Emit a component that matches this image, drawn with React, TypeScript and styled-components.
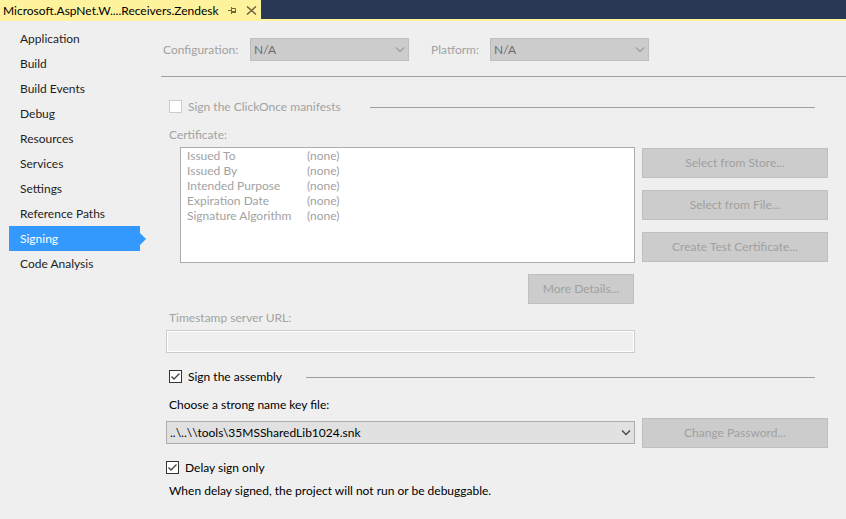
import React, { useState } from "react";
import styled, { createGlobalStyle } from "styled-components";

const GlobalStyle = createGlobalStyle`
  *, *::before, *::after { box-sizing: border-box; }
  body {
    margin: 0;
    background: #efefef;
    color: #000;
    font: 12px/16px Lato, "Open Sans", sans-serif;
  }
  button, input, select { font: inherit; }
`;

const Page = styled.div`
  display: flex;
  flex-direction: column;
  min-height: 100vh;
`;

const TabStrip = styled.header`
  display: flex;
  height: 21px;
  background: #293955;
  border-bottom: 2px solid #fff29d;
`;

const DocumentTab = styled.div`
  display: flex;
  align-items: center;
  width: 261px;
  height: 21px;
  padding-left: 3px;
  background: #fff29d;
  white-space: nowrap;
`;

const TabTitle = styled.span`
  flex: 1;
`;

const TabButton = styled.button`
  display: flex;
  align-items: center;
  justify-content: center;
  width: 19px;
  height: 19px;
  padding: 0;
  border: 0;
  background: transparent;
  color: #75633d;
`;

const Workspace = styled.div`
  display: flex;
  flex: 1;
`;

const Sidebar = styled.nav`
  flex: none;
  width: 161px;
  padding: 5px 15px 0 9px;
`;

const NavItem = styled.a<{ $active?: boolean }>`
  display: flex;
  align-items: center;
  height: 25px;
  color: ${(p) => (p.$active ? "#fff" : "#1e1e1e")};
  text-decoration: none;
`;

const NavText = styled.span<{ $active?: boolean }>`
  flex: 1;
  padding-left: 11px;
  line-height: 25px;
  margin-right: ${(p) => (p.$active ? "0" : "6px")};
  background: ${(p) => (p.$active ? "#3399ff" : "transparent")};
`;

const NavArrow = styled.span`
  border: 6px solid transparent;
  border-right: 0;
  border-left-color: #3399ff;
`;

const Main = styled.main`
  flex: 1;
  min-width: 0;
`;

const ConfigBar = styled.div`
  display: flex;
  align-items: center;
  height: 56px;
  padding: 3px 0 0 2px;
  border-bottom: 1px solid #a0a0a0;
`;

const BarLabel = styled.label<{ $width: number }>`
  flex: none;
  width: ${(p) => p.$width}px;
  color: #a2a2a2;
`;

const SelectShell = styled.span<{ $width?: number }>`
  display: grid;
  align-items: center;
  width: ${(p) => (p.$width ? `${p.$width}px` : "auto")};
  margin-right: ${(p) => (p.$width ? "22px" : "0")};
  margin-bottom: 1px;
`;

const SelectBox = styled.select`
  grid-area: 1 / 1;
  width: 100%;
  height: 23px;
  padding: 0 20px 0 3px;
  border: 1px solid #acacac;
  border-radius: 0;
  background: #e1e1e1;
  color: #000;
  appearance: none;

  &:disabled {
    border-color: #bfbfbf;
    background: #ccc;
    color: #6d6d6d;
    opacity: 1;
  }
`;

const Chevron = styled.svg<{ $muted?: boolean }>`
  grid-area: 1 / 1;
  justify-self: end;
  margin-right: 4px;
  color: ${(p) => (p.$muted ? "#a0a0a0" : "#444")};
  pointer-events: none;
`;

const Form = styled.form`
  padding: 22px 18px 16px 5px;
`;

const GroupHeading = styled.div`
  display: flex;
  align-items: center;
  height: 16px;
  padding: 0 13px 0 3px;
`;

const Rule = styled.hr`
  flex: 1;
  height: 1px;
  margin: 0;
  border: 0;
  background: #a0a0a0;
`;

const CheckLabel = styled.label<{ $width?: number; $muted?: boolean }>`
  display: inline-flex;
  align-items: center;
  gap: 6px;
  width: ${(p) => (p.$width ? `${p.$width}px` : "auto")};
  color: ${(p) => (p.$muted ? "#a2a2a2" : "#000")};
  white-space: nowrap;
`;

const CheckShell = styled.span`
  display: grid;
  width: 13px;
  height: 13px;
  margin-bottom: 1px;
`;

const CheckInput = styled.input`
  grid-area: 1 / 1;
  width: 13px;
  height: 13px;
  margin: 0;
  border: 1px solid #333;
  background: #fff;
  appearance: none;

  &:disabled {
    border-color: #ccc;
  }
`;

const Tick = styled.svg`
  grid-area: 1 / 1;
  pointer-events: none;
`;

const FieldLabel = styled.label<{ $muted?: boolean }>`
  display: block;
  padding-left: 3px;
  color: ${(p) => (p.$muted ? "#a2a2a2" : "#000")};
`;

const Columns = styled.div`
  display: grid;
  grid-template-columns: minmax(0, 1fr) 186px;
  column-gap: 7px;
`;

const CertificateColumns = styled(Columns)`
  margin: 12px 0 6px;
`;

const CertificateLabel = styled(FieldLabel)`
  grid-column: 1 / -1;
  margin-bottom: 4px;
`;

const CertificatePanel = styled.div`
  min-height: 116px;
  margin-left: 14px;
  padding: 0 6px;
  border: 1px solid #abadb3;
  background: #fff;
  color: #a2a2a2;
`;

const CertificateTable = styled.table`
  border-collapse: collapse;
  line-height: 15px;

  th, td {
    padding: 0;
    font-weight: 400;
    text-align: left;
  }
  th { width: 120px; }
`;

const ButtonStack = styled.div`
  display: flex;
  flex-direction: column;
  gap: 12px;
  padding-top: 1px;
`;

const PushButton = styled.button<{ $width?: number }>`
  width: ${(p) => (p.$width ? `${p.$width}px` : "100%")};
  height: 30px;
  padding: 0;
  border: 1px solid #bfbfbf;
  background: #ccc;
  color: #a0a0a0;
`;

const DetailsRow = styled.div`
  display: flex;
  justify-content: flex-end;
  padding: 11px 1px 0 0;
`;

const UrlInput = styled.input`
  grid-column: 1;
  width: 100%;
  height: 23px;
  margin: 4px 0 16px;
  padding: 0 4px;
  border: 1px solid #ccc;
  border-radius: 0;
  outline: 1px solid #fff;
  outline-offset: -2px;
  background: #efefef;
`;

const KeyColumns = styled(Columns)`
  align-items: center;
  margin: 5px 0 12px;
`;

const KeyLabel = styled(FieldLabel)`
  margin-top: 12px;
`;

const Note = styled.p`
  margin: 5px 0 0;
  padding-left: 3px;
`;

const pages = [
  "Application", "Build", "Build Events", "Debug", "Resources",
  "Services", "Settings", "Reference Paths", "Signing", "Code Analysis",
];

const certificateFields = [
  "Issued To", "Issued By", "Intended Purpose", "Expiration Date", "Signature Algorithm",
];

function Dropdown({ id, value, disabled, width }: {
  id: string; value: string; disabled?: boolean; width?: number;
}) {
  return (
    <SelectShell $width={width}>
      <SelectBox id={id} disabled={disabled} defaultValue={value}>
        <option value={value}>{value}</option>
      </SelectBox>
      <Chevron $muted={disabled} width="10" height="7" viewBox="0 0 10 7" aria-hidden="true">
        <path d="M1 1.5 L5 5.5 L9 1.5" fill="none" stroke="currentColor" strokeWidth="1.3" />
      </Chevron>
    </SelectShell>
  );
}

function Check({ label, initial = false, disabled, width }: {
  label: string; initial?: boolean; disabled?: boolean; width?: number;
}) {
  const [checked, setChecked] = useState(initial);
  return (
    <CheckLabel $muted={disabled} $width={width}>
      <CheckShell>
        <CheckInput
          type="checkbox"
          checked={checked}
          disabled={disabled}
          onChange={(e) => setChecked(e.target.checked)}
        />
        {checked && (
          <Tick width="13" height="13" viewBox="0 0 13 13" aria-hidden="true">
            <path d="M2.5 6.5 L5 9 L10.5 3.5" fill="none" stroke="#444" strokeWidth="1.4" />
          </Tick>
        )}
      </CheckShell>
      {label}
    </CheckLabel>
  );
}

export default function App() {
  return (
    <Page>
      <GlobalStyle />
      <TabStrip>
        <DocumentTab>
          <TabTitle>Microsoft.AspNet.W....Receivers.Zendesk</TabTitle>
          <TabButton type="button" aria-label="Pin tab">
            <svg width="9" height="7" viewBox="0 0 9 7" fill="none" stroke="currentColor">
              <path d="M0 3.5H3M3.5 0V7M3.5 1.5H7.5V5.5M3.5 4.5H8M3.5 5.5H8" />
            </svg>
          </TabButton>
          <TabButton type="button" aria-label="Close tab">
            <svg width="11" height="9" viewBox="0 0 11 9" fill="none" stroke="currentColor">
              <path d="M1 0.5L10 8.5M10 0.5L1 8.5" strokeWidth="1.5" />
            </svg>
          </TabButton>
        </DocumentTab>
      </TabStrip>
      <Workspace>
        <Sidebar aria-label="Project properties">
          {pages.map((page) => {
            const active = page === "Signing";
            return (
              <NavItem key={page} href="#" $active={active} aria-current={active ? "page" : undefined}>
                <NavText $active={active}>{page}</NavText>
                {active && <NavArrow />}
              </NavItem>
            );
          })}
        </Sidebar>
        <Main>
          <ConfigBar>
            <BarLabel htmlFor="configuration" $width={87}>Configuration:</BarLabel>
            <Dropdown id="configuration" value="N/A" width={159} disabled />
            <BarLabel htmlFor="platform" $width={59}>Platform:</BarLabel>
            <Dropdown id="platform" value="N/A" width={159} disabled />
          </ConfigBar>
          <Form>
            <GroupHeading>
              <Check label="Sign the ClickOnce manifests" width={201} disabled />
              <Rule />
            </GroupHeading>
            <CertificateColumns>
              <CertificateLabel as="div" id="certificate-label" $muted>Certificate:</CertificateLabel>
              <CertificatePanel>
                <CertificateTable aria-labelledby="certificate-label">
                  <tbody>
                    {certificateFields.map((field) => (
                      <tr key={field}>
                        <th scope="row">{field}</th>
                        <td>(none)</td>
                      </tr>
                    ))}
                  </tbody>
                </CertificateTable>
              </CertificatePanel>
              <ButtonStack>
                <PushButton type="button" disabled>Select from Store...</PushButton>
                <PushButton type="button" disabled>Select from File...</PushButton>
                <PushButton type="button" disabled>Create Test Certificate...</PushButton>
              </ButtonStack>
              <DetailsRow>
                <PushButton type="button" $width={106} disabled>More Details...</PushButton>
              </DetailsRow>
            </CertificateColumns>
            <FieldLabel htmlFor="timestamp" $muted>Timestamp server URL:</FieldLabel>
            <Columns>
              <UrlInput id="timestamp" type="text" disabled />
            </Columns>
            <GroupHeading>
              <Check label="Sign the assembly" width={137} initial />
              <Rule />
            </GroupHeading>
            <KeyLabel htmlFor="key-file">Choose a strong name key file:</KeyLabel>
            <KeyColumns>
              <Dropdown id="key-file" value={"..\\..\\\\tools\\35MSSharedLib1024.snk"} />
              <PushButton type="button" disabled>Change Password...</PushButton>
            </KeyColumns>
            <Check label="Delay sign only" initial />
            <Note>When delay signed, the project will not run or be debuggable.</Note>
          </Form>
        </Main>
      </Workspace>
    </Page>
  );
}
